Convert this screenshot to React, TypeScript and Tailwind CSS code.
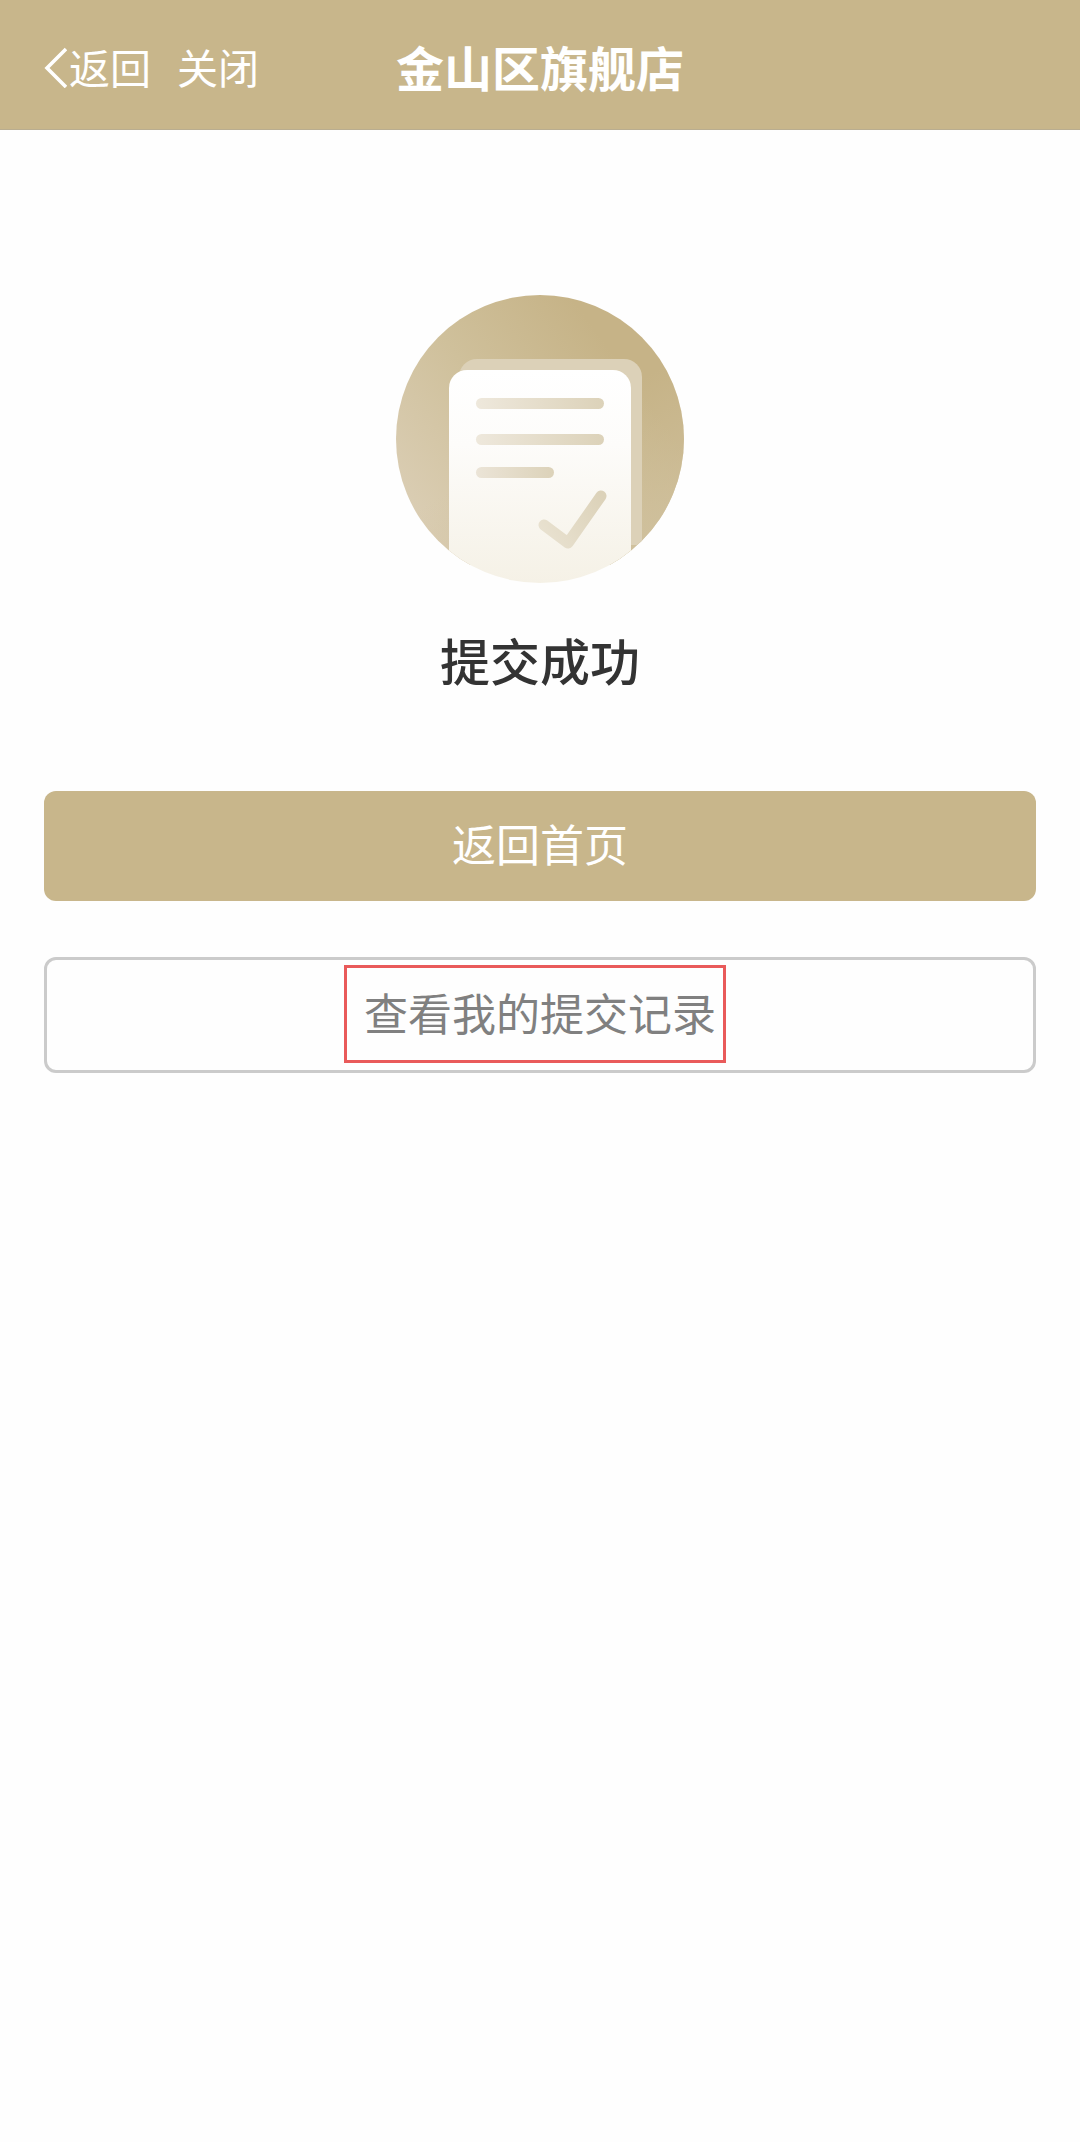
function BackIcon() {
    return (
        <svg className="w-[23px] h-[44px]" viewBox="0 0 23 44" fill="none" aria-hidden="true">
            <path d="M22 5 L3 24 L22 43" stroke="white" strokeWidth="3.6" />
        </svg>
    );
}

function SubmittedIcon() {
    return (
        <svg className="w-72 h-72" viewBox="0 0 288 288" fill="none" aria-hidden="true">
            <defs>
                <linearGradient id="disc" x1="20" y1="220" x2="225" y2="70" gradientUnits="userSpaceOnUse">
                    <stop offset="0" stopColor="#dacdb3" />
                    <stop offset="0.5" stopColor="#cfc09b" />
                    <stop offset="1" stopColor="#c6b387" />
                </linearGradient>
                <linearGradient id="discShade" x1="200" y1="110" x2="270" y2="230" gradientUnits="userSpaceOnUse">
                    <stop offset="0" stopColor="#d0c19e" stopOpacity="0" />
                    <stop offset="1" stopColor="#d0c19e" stopOpacity="0.8" />
                </linearGradient>
                <linearGradient id="paper" x1="0" y1="75" x2="0" y2="288" gradientUnits="userSpaceOnUse">
                    <stop offset="0" stopColor="#ffffff" />
                    <stop offset="0.35" stopColor="#fdfcfa" />
                    <stop offset="1" stopColor="#f5f1e6" />
                </linearGradient>
                <linearGradient id="line" x1="80" y1="0" x2="208" y2="0" gradientUnits="userSpaceOnUse">
                    <stop offset="0" stopColor="#eee8dc" />
                    <stop offset="1" stopColor="#dcd2b9" />
                </linearGradient>
                <linearGradient id="shortLine" x1="80" y1="0" x2="158" y2="0" gradientUnits="userSpaceOnUse">
                    <stop offset="0" stopColor="#ebe4d7" />
                    <stop offset="1" stopColor="#dcd2b9" />
                </linearGradient>
                <linearGradient id="tick" x1="142" y1="240" x2="205" y2="200" gradientUnits="userSpaceOnUse">
                    <stop offset="0" stopColor="#e9e2d1" />
                    <stop offset="1" stopColor="#dcd2b9" />
                </linearGradient>
                <clipPath id="round">
                    <circle cx="144" cy="144" r="144" />
                </clipPath>
            </defs>
            <g clipPath="url(#round)">
                <path d="M0 0 H288 V225 L236 270 H53 L0 225 Z" fill="url(#disc)" />
                <path d="M0 0 H288 V225 L236 270 H53 L0 225 Z" fill="url(#discShade)" />
                <path d="M63 250 V82 A18 18 0 0 1 81 64 H228 A18 18 0 0 1 246 82 V250 Z" fill="#dcd1b8" />
                <rect x="53" y="75" width="182" height="250" rx="18" fill="url(#paper)" />
                <rect x="80" y="103" width="128" height="11" rx="5.5" fill="url(#line)" />
                <rect x="80" y="139" width="128" height="11" rx="5.5" fill="url(#line)" />
                <rect x="80" y="172" width="78" height="11" rx="5.5" fill="url(#shortLine)" />
                <path
                    d="M148 230 L172 248 L205 201"
                    stroke="url(#tick)"
                    strokeWidth="11"
                    strokeLinecap="round"
                    strokeLinejoin="round"
                />
            </g>
        </svg>
    );
}

export default function App() {
    return (
        <div className="min-h-screen bg-[#fefefe] font-['Noto_Sans_CJK_SC',sans-serif]">
            <header className="grid grid-cols-[1fr_auto_1fr] items-center h-[130px] px-11 pt-[2px] bg-[#c8b68b] border-b border-[#b9ad90] text-white">
                <nav className="flex items-center gap-[26px] text-[41px] leading-[60px] font-normal">
                    <button type="button" className="flex items-center gap-[2px]">
                        <BackIcon />
                        返回
                    </button>
                    <button type="button">关闭</button>
                </nav>
                <h1 className="text-[48px] leading-[60px] font-bold">金山区旗舰店</h1>
            </header>

            <main className="flex flex-col items-center px-11 pt-[165px]">
                <SubmittedIcon />
                <h2 className="mt-10 text-[50px] leading-[72px] font-medium text-[#333333]">提交成功</h2>
                <div className="flex flex-col gap-14 w-full mt-24 text-[44px] leading-[60px] font-normal">
                    <button type="button" className="h-[110px] pb-[6px] rounded-xl bg-[#c8b68b] text-white">
                        返回首页
                    </button>
                    <button type="button" className="h-[116px] pb-[6px] rounded-xl border-3 border-[#cbcbcb] text-[#808080]">
                        <span className="relative inline-block">
                            查看我的提交记录
                            <span className="absolute -left-5 -right-[10px] -top-[17px] -bottom-[21px] border-3 border-[#e95a5a]" />
                        </span>
                    </button>
                </div>
            </main>
        </div>
    );
}
